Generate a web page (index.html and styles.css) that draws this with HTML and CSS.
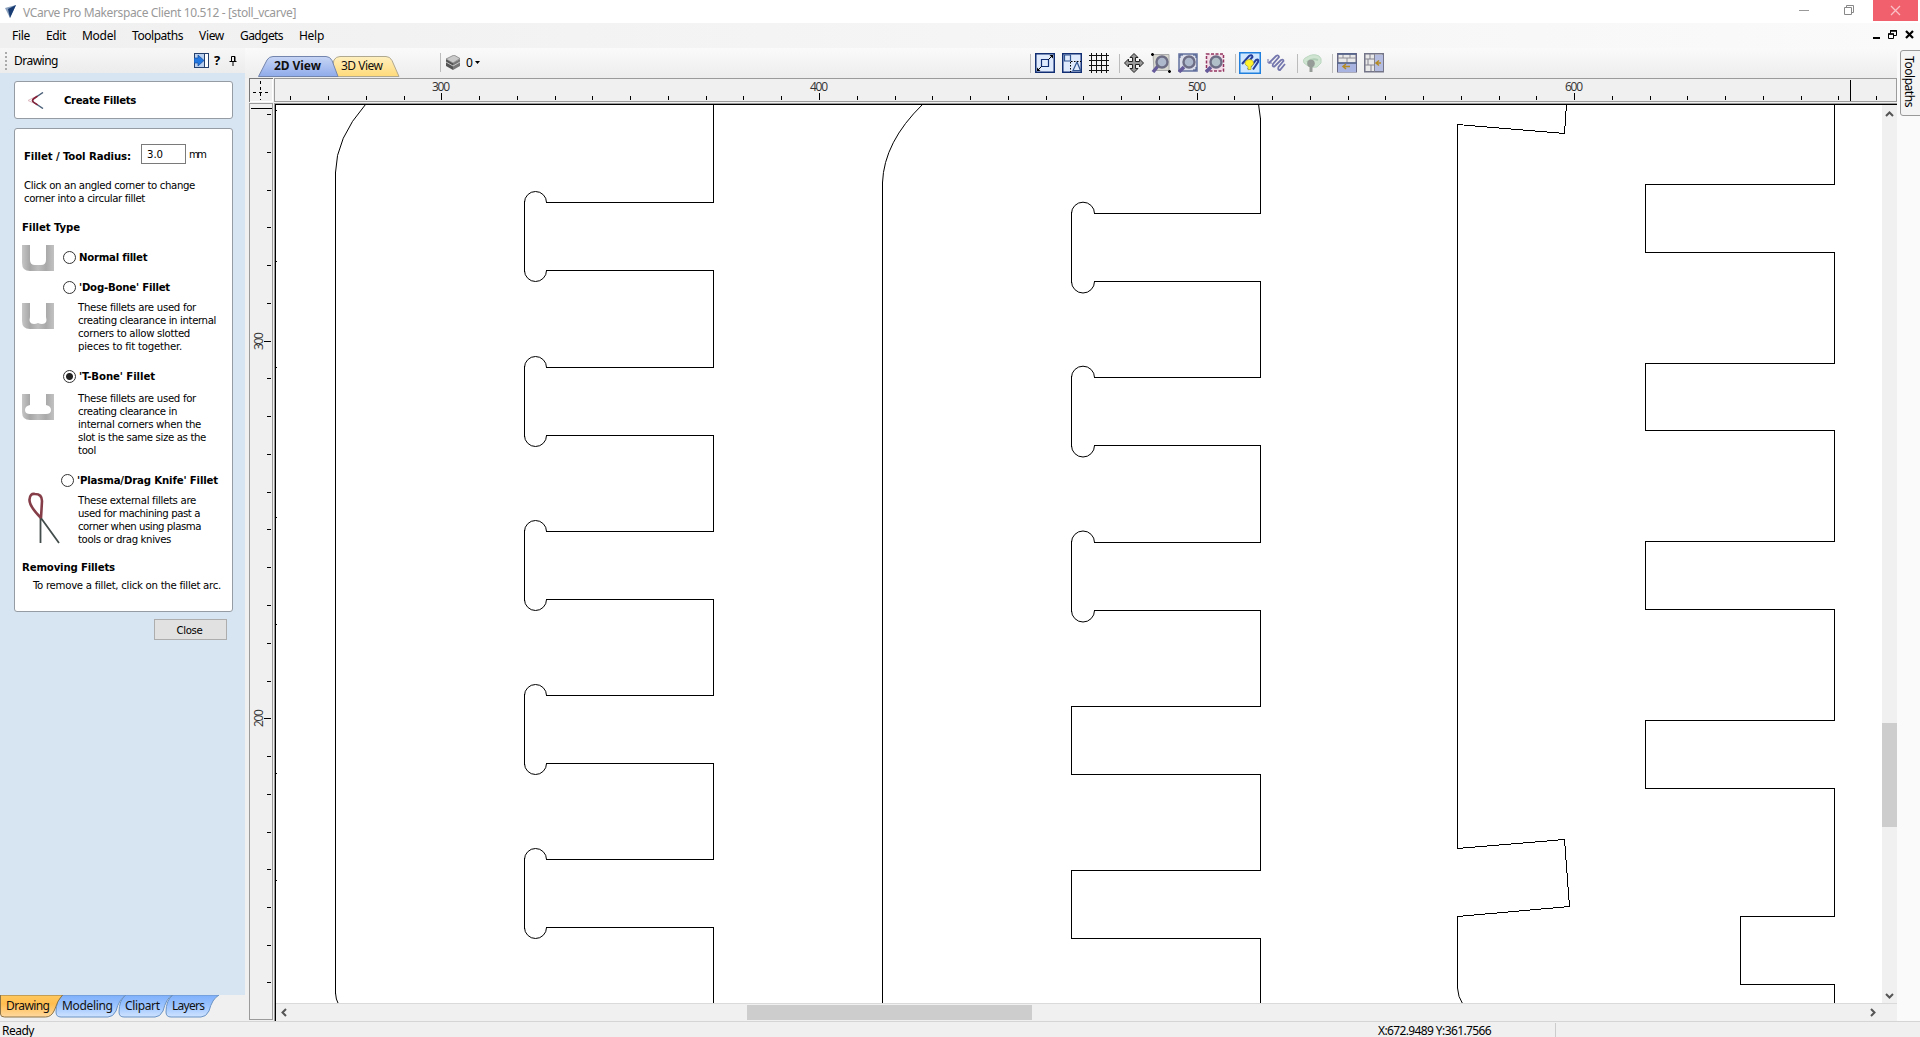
FILE: index.html
```html
<!DOCTYPE html>
<html lang="en">
<head>
<meta charset="utf-8">
<title>VCarve Pro Makerspace Client</title>
<link rel="stylesheet" href="styles.css">
</head>
<body>
<div class="app">
  <header class="titlebar">
    <svg class="logo" width="11" height="13" viewBox="0 0 11 13"><path d="M0 3L11 0 5 13Z" fill="#8aa0bd"/><path d="M3 4L11 0 5 13Z" fill="#173b72"/></svg>
    <span class="apptitle" data-w="273">VCarve Pro Makerspace Client 10.512 - [stoll_vcarve]</span>
    <div class="winbtns">
      <svg class="min" width="11" height="11" viewBox="0 0 11 11"><path d="M0 5.5h10" stroke="#999"/></svg>
      <svg class="restore" width="11" height="11" viewBox="0 0 11 11" fill="none" stroke="#888"><path d="M.5 2.500h7v7h-7zM2.500 2.500v-2h7v7h-2"/></svg>
      <div class="winclose"><svg width="11" height="11" viewBox="0 0 11 11"><path d="M1 1l9 9M10 1l-9 9" stroke="#fbc0c6" stroke-width="1.300"/></svg></div>
    </div>
  </header>
  <nav class="menubar">
    <div class="menus">
      <span data-w="18">File</span><span data-w="20">Edit</span><span data-w="34">Model</span><span data-w="51">Toolpaths</span><span data-w="25">View</span><span data-w="43">Gadgets</span><span data-w="25">Help</span>
    </div>
    <div class="mdibtns">
      <svg width="7" height="9" viewBox="0 0 7 9"><path d="M0 8h7" stroke="#000" stroke-width="2"/></svg>
      <svg width="9" height="9" viewBox="0 0 9 9" fill="none" stroke="#000"><path d="M.5 4h5v4.500h-5zM2.500 3.500v-3h6v5h-2.500" /><path d="M0 4h6M2 1h7" stroke-width="1.600"/></svg>
      <svg width="9" height="9" viewBox="0 0 9 9"><path d="M1 1l7 7M8 1l-7 7" stroke="#000" stroke-width="2.200"/></svg>
    </div>
  </nav>

  <div class="main">
    <aside class="side">
      <div class="sidehead">
        <i class="grip"></i><span class="sidetitle" data-w="44">Drawing</span>
        <svg width="15" height="15" viewBox="0 0 15 15"><rect x=".5" y=".5" width="14" height="14" fill="#fff" stroke="#26406e"/><path d="M1 1h9v13H1z" fill="#b9cff0"/><path d="M10.500 1v13" stroke="#26406e"/><path d="M0 5h4V2l6 5.500L4 13v-3H0z" fill="#2377e0" stroke="#164b9c" stroke-width=".7"/></svg>
        <b class="help">?</b>
        <svg width="8" height="10" viewBox="0 0 8 10"><path d="M2.500.5h3.500v5H2.500zM.5 5.500h7M4 6v4M5.500 1v4" fill="none" stroke="#000"/></svg>
      </div>
      <div class="sidebody">
        <section class="card head">
          <svg width="16" height="17" viewBox="0 0 16 17"><path d="M0 8.500L9 4M0 8.500l9 4" stroke="#ddb9c1" fill="none"/><path d="M15 .5L6 6.500q-3 2 0 4L15 16.500" fill="none" stroke="#4b6079" stroke-width="1.500"/><path d="M9.500 4.200L6 6.500q-3 2 0 4l3.500 2.300" fill="none" stroke="#8c2037" stroke-width="1.500"/></svg>
          <b data-w="72">Create Fillets</b>
        </section>
        <section class="card form">
          <div class="radius"><b data-w="107">Fillet / Tool Radius:</b><span class="field"><span data-w="16">3.0</span></span><span class="unit" data-w="16">mm</span></div>
          <p class="hint"><span data-w="171">Click on an angled corner to change</span><span data-w="121">corner into a circular fillet</span></p>
          <h4 class="t1"><span data-w="58">Fillet Type</span></h4>
          <div class="opt o1">
            <svg class="shape" width="32" height="26" viewBox="0 0 32 26">
              <defs><linearGradient id="wall"><stop stop-color="#c6c6c6"/><stop offset=".25" stop-color="#a6a6a6"/><stop offset=".5" stop-color="#bdbdbd"/><stop offset=".75" stop-color="#a9a9a9"/><stop offset="1" stop-color="#c2c2c2"/></linearGradient></defs>
              <path d="M0 0h8v15q0 5 5 5h6q5 0 5-5V0h8v26H8q-8 0-8-8z" fill="url(#wall)"/></svg>
            <i class="radio"></i><b data-w="68">Normal fillet</b>
          </div>
          <div class="opt o2"><i class="radio"></i><b data-w="91">'Dog-Bone' Fillet</b></div>
          <div class="body">
            <svg class="shape" width="32" height="26" viewBox="0 0 32 26"><path d="M0 0h8v14q-2 7 4 7 2 0 4-1 2 1 4 1 6 0 4-7V0h8v26H8q-8 0-8-8z" fill="url(#wall)"/></svg>
            <p><span data-w="118">These fillets are used for</span><span data-w="138">creating clearance in internal</span><span data-w="112">corners to allow slotted</span><span data-w="104">pieces to fit together.</span></p>
          </div>
          <div class="opt o3"><i class="radio on"></i><b data-w="76">'T-Bone' Fillet</b></div>
          <div class="body b3">
            <svg class="shape" width="32" height="26" viewBox="0 0 32 26"><path d="M0 0h8v11q-5 1-5 5 0 4 5 4h16q5 0 5-4 0-4-5-5V0h8v26H8q-8 0-8-8z" fill="url(#wall)"/></svg>
            <p><span data-w="118">These fillets are used for</span><span data-w="99">creating clearance in</span><span data-w="123">internal corners when the</span><span data-w="128">slot is the same size as the</span><span data-w="18">tool</span></p>
          </div>
          <div class="opt o4"><i class="radio"></i><b data-w="141">'Plasma/Drag Knife' Fillet</b></div>
          <div class="body b4">
            <svg class="knife" width="38" height="54" viewBox="0 0 38 54"><path d="M18.500 26v25M19 26L37 51" fill="none" stroke="#434d4b" stroke-width="1.800"/><path d="M19 26Q7 14 7.500 7.500T13 2q7 0 7 7l-1 17" fill="none" stroke="#853d48" stroke-width="2.600"/></svg>
            <p><span data-w="118">These external fillets are</span><span data-w="122">used for machining past a</span><span data-w="123">corner when using plasma</span><span data-w="93">tools or drag knives</span></p>
          </div>
          <h4 class="t2"><span data-w="93">Removing Fillets</span></h4>
          <p class="remove"><span data-w="188">To remove a fillet, click on the fillet arc.</span></p>
        </section>
        <button class="close"><span data-w="26">Close</span></button>
      </div>
      <svg class="sidetabs" width="245" height="26" viewBox="0 0 245 26">
        <defs>
          <linearGradient id="or" x2="0" y2="1"><stop stop-color="#ffc95f"/><stop offset=".4" stop-color="#ffbd50"/><stop offset="1" stop-color="#ffd9a0"/></linearGradient>
          <linearGradient id="bl" x2="0" y2="1"><stop stop-color="#7fb0fb"/><stop offset=".5" stop-color="#9cc4ff"/><stop offset="1" stop-color="#cfe3ff"/></linearGradient>
        </defs>
        <g fill="url(#bl)" stroke="#6b93c4">
          <path d="M173 0q-7 5-7 17 0 5 5 5h30q5 0 8-6 3-12 10-16z"/>
          <path d="M126 0q-7 5-7 17 0 5 5 5h31q5 0 8-6 3-12 9-16z"/>
          <path d="M63 0q-7 5-7 17 0 5 5 5h47q5 0 8-6 3-12 10-16z"/>
        </g>
        <path d="M.5 0v19q0 3 4 3h41q6 0 9-7 3-10 8-15z" fill="url(#or)" stroke="#8c7448"/>
        <g class="svgtext">
          <text x="6" y="15" textLength="44">Drawing</text><text x="62" y="15" textLength="51">Modeling</text><text x="125" y="15" textLength="35">Clipart</text><text x="172" y="15" textLength="33">Layers</text>
        </g>
      </svg>
    </aside>

    <main class="view">
      <div class="toolbar">
        <svg class="viewtabs" width="142" height="22" viewBox="0 0 142 22">
          <defs>
            <linearGradient id="tb" x2="0" y2="1"><stop stop-color="#c8d6f5"/><stop offset="1" stop-color="#8fabea"/></linearGradient>
            <linearGradient id="ty" x2="0" y2="1"><stop stop-color="#fff0c0"/><stop offset="1" stop-color="#ffda78"/></linearGradient>
          </defs>
          <path d="M72 20.500L76 4q2-3.500 6-3.500h46q4 0 6 4l7 16z" fill="url(#ty)" stroke="#b0a88f"/>
          <path d="M.5 20.500L9 4Q11 .5 15 .5h53q4 0 6 4l6 16z" fill="url(#tb)" stroke="#7385ad"/>
          <g class="svgtext"><text x="16" y="14" font-weight="bold" textLength="47">2D View</text><text x="83" y="14" textLength="42">3D View</text></g>
        </svg>
        <i class="sep layersep"></i>
        <svg width="15" height="15" viewBox="0 0 15 15"><path d="M0 4l7 4v7L0 11z" fill="#555"/><path d="M7 8l7-4v7l-7 4z" fill="#777"/><path d="M0 4l8-4 6 3.500L7 8z" fill="#c9c9c9" stroke="#777" stroke-width=".7"/><path d="M0 7l7 4 7-4" fill="none" stroke="#ddd" stroke-width=".8"/></svg>
        <span class="zero">0</span><svg class="caret" width="5" height="3" viewBox="0 0 5 3"><path d="M0 0h5L2.500 3z"/></svg>
        <div class="tools">
          <i class="sep"></i>
          <svg class="ic" viewBox="0 0 20 20" fill="none" stroke="#132f74"><rect x=".75" y=".75" width="18.500" height="18.500" fill="#dfeafd" stroke-width="1.500"/><path d="M6.500 6.500h7v7h-7z" stroke-width="1.200"/><path d="M13.500 6.500l3.500-3.500M6.500 13.500L3 17" stroke="#000"/><path d="M18 2v3.500L14.500 2zM2 18v-3.500L5.500 18z" fill="#000" stroke="none"/></svg>
          <svg class="ic" viewBox="0 0 20 20" fill="none" stroke="#31558f"><rect x=".75" y=".75" width="18.500" height="18.500" fill="#dfeafd" stroke="#132f74" stroke-width="1.500"/><path d="M2.500 2h6v6h-6zM11 17.500l4-8.500 3.500 8.500z" stroke-width="1.200"/><path d="M9 8.500h10M8.500 9v10" stroke="#000" stroke-dasharray="1.500 1.500"/></svg>
          <svg class="ic" viewBox="0 0 20 20" stroke="#111" shape-rendering="crispEdges"><path d="M2.500 0v20M7.500 0v20M12.500 0v20M17.500 0v20M0 2.500h20M0 7.500h20M0 12.500h20M0 17.500h20"/></svg>
          <i class="sep"></i>
          <svg class="ic" viewBox="0 0 20 20"><path d="M10 .5l4 4h-2.500v4h4V6l4 4-4 4v-2.500h-4v4H14l-4 4-4-4h2.500v-4h-4V14l-4-4 4-4v2.500h4v-4H6z" fill="#999" stroke="#222"/></svg>
          <svg class="ic" viewBox="0 0 20 20"><path d="M2 1.500h16v16H3z" fill="#d8d8d0" stroke="#aaa"/><path d="M7 13l-5 6" stroke="#655a9a" stroke-width="3.500"/><circle cx="11" cy="9" r="5.500" fill="#aeb8cc" stroke="#6d6d86" stroke-width="2.400"/><path d="M0 1.500h3M1.500 0v3M17 18.500h3M18.500 17v3" stroke="#000" stroke-width="1.500"/></svg>
          <svg class="ic" viewBox="0 0 20 20"><path d="M1 1h18v17H1z" fill="#dcdfeb" stroke="#63719e" stroke-width="1.500"/><path d="M2 5V2h3M15 2h3v3M18 14v3h-3" fill="none" stroke="#3f5183" stroke-width="1"/><path d="M6 14l-5 5" stroke="#655a9a" stroke-width="3.500"/><circle cx="11" cy="9" r="5.500" fill="#aeb8cc" stroke="#6d6d86" stroke-width="2.400"/></svg>
          <svg class="ic" viewBox="0 0 20 20"><path d="M1.500 1h17v17h-17z" fill="#f3dce8" stroke="#92345f" stroke-width="1.500" stroke-dasharray="3 1.500"/><path d="M6 14l-5 5" stroke="#655a9a" stroke-width="3.500"/><circle cx="11" cy="9" r="5.500" fill="#b0bfc8" stroke="#6d6d86" stroke-width="2.400"/></svg>
          <i class="sep"></i>
          <svg class="ic sel" viewBox="0 0 22 22"><rect x=".75" y=".75" width="20.500" height="20.500" fill="#cfe8ff" stroke="#2180dd" stroke-width="1.500"/><path d="M3 12L10 4q3-2 3.500 1L7 13M9 17.500L17 8q3-1.500 2 2l-5 7.500" fill="none" stroke="#263f9b" stroke-width="2"/><path d="M10 7.500q4.500 0 4.500 4-.5 2-2.500 3v3H9v-3q-2.500-1-3-3 0-3.500 4-4z" fill="#fff32c" stroke="#b5a92c" stroke-width=".7"/></svg>
          <svg class="ic" viewBox="0 0 20 20" fill="none" stroke="#7375ad" stroke-width="1.800"><path d="M2 10l7-7q2.500-1.500 3 1l-6 7q-1 3 1.500 2.500L14 7q2.500-1 2.500 1l-5 6q-1 3 1.500 3l5-6"/><path d="M1 6v4h4" stroke-width="1"/></svg>
          <i class="sep"></i>
          <svg class="ic" viewBox="0 0 20 20"><path d="M2 10Q0 6 5 4q6-4 12-1 3 2 2 7l-4 4q-6 1-9-1z" fill="#cfe5d2" stroke="#bcd7c0"/><path d="M5 9q5-4 11-2" fill="none" stroke="#b0cdb5" stroke-width="2"/><circle cx="9" cy="10.500" r="3.800" fill="#969c97"/><path d="M7.500 12h3v7h-3z" fill="#969c97"/></svg>
          <i class="sep"></i>
          <svg class="ic" viewBox="0 0 20 20"><rect x=".75" y=".75" width="18.500" height="18" fill="#e9e9e9" stroke="#686884" stroke-width="1.500"/><path d="M1 10h18v9H1z" fill="#a9b3df"/><path d="M0 10h20M1 5h18M6 1v4M13 1v4M10 5v5" stroke="#8e8e98"/><path d="M1 1h18M0 10h20" stroke="#52618b" stroke-width="1.500"/><path d="M6 13.500h7M9 11l-3 2.500L9 16" stroke="#b48a23" stroke-width="1.500" fill="none"/></svg>
          <svg class="ic" viewBox="0 0 20 20"><rect x=".75" y=".75" width="18.500" height="18" fill="#e9e9e9" stroke="#75758a" stroke-width="1.500"/><path d="M11 2h8v16h-8z" fill="#b4bce0"/><path d="M10.500 1v18M1 6h9M1 12h9M6 1v5M4 6v6M7 12v6" stroke="#83838f"/><path d="M12 10h5M15 7.500L12 10l3 2.500" stroke="#b48a23" stroke-width="1.500" fill="none"/></svg>
        </div>
      </div>
      <div class="work">
        <svg class="corner" width="24" height="24" viewBox="0 0 24 24" shape-rendering="crispEdges"><path d="M.5 24V.5H24" fill="none" stroke="#777"/><path d="M23.500 1v22.500H1" fill="none" stroke="#fff"/><path d="M4 14.500h15M11.500 3v19" stroke="#000" stroke-dasharray="3 3" /></svg>
        <svg class="ruler" width="1623" height="24" viewBox="274 78 1623 24" shape-rendering="crispEdges">
          <rect x="274.500" y="78.500" width="1622" height="23" fill="#f0f0f0" stroke="#9b9b9b"/>
          <path stroke="#000" d="M290.500 96v4M328.500 96v4M366.500 96v4M404.500 96v4M441.500 93v7M479.500 96v4M517.500 96v4M555.500 96v4M592.500 96v4M630.500 96v4M668.500 96v4M706.500 96v4M743.500 96v4M781.500 96v4M819.500 93v7M857.500 96v4M895.500 96v4M932.500 96v4M970.500 96v4M1008.500 96v4M1046.500 96v4M1083.500 96v4M1121.500 96v4M1159.500 96v4M1197.500 93v7M1234.500 96v4M1272.500 96v4M1310.500 96v4M1348.500 96v4M1385.500 96v4M1423.500 96v4M1461.500 96v4M1499.500 96v4M1536.500 96v4M1574.500 93v7M1612.500 96v4M1650.500 96v4M1687.500 96v4M1725.500 96v4M1763.500 96v4M1801.500 96v4M1838.500 96v4M1876.500 96v4M1850.500 80v21"/>
          <g class="num"><text x="432" y="91" textLength="18">300</text><text x="810" y="91" textLength="18">400</text><text x="1188" y="91" textLength="18">500</text><text x="1565" y="91" textLength="18">600</text></g>
        </svg>
        <svg class="ruler" width="24" height="917" viewBox="249 103 24 917" shape-rendering="crispEdges">
          <rect x="249.500" y="103.500" width="23" height="916" fill="#f0f0f0" stroke="#9b9b9b"/>
          <path stroke="#000" d="M251 108.500h21M267 114.500h4M267 152.500h4M267 190.500h4M267 227.500h4M267 265.500h4M267 303.500h4M264 341.500h7M267 378.500h4M267 416.500h4M267 454.500h4M267 492.500h4M267 529.500h4M267 567.500h4M267 605.500h4M267 643.500h4M267 681.500h4M264 718.500h7M267 756.500h4M267 794.500h4M267 832.500h4M267 869.500h4M267 907.500h4M267 945.500h4M267 982.500h4"/>
          <g class="num"><text transform="translate(263 350) rotate(-90)" textLength="18">300</text><text transform="translate(263 727) rotate(-90)" textLength="18">200</text></g>
        </svg>
        <div class="canvas">
          <svg class="drawing" width="1606" height="898" viewBox="276 105 1606 898">
            <g fill="none" stroke="#000" stroke-width="1">
              <path class="crisp" d="M335.500 172V994M713.500 105V202.500M713.500 270V367.500M713.500 435V531.500M713.500 599V695.500M713.500 763V859.500M713.500 927V1003"/>
              <path d="M335.500 172.500Q336 138 365.500 104.500M335.500 993Q336 1000 338 1003"/>
              <path class="crisp" d="M524.500 201V272M524.500 366V437M524.500 530V601M524.500 694V765M524.500 858V929M546 202.500H714M546 270.500H714M546 367.500H714M546 435.500H714M546 531.500H714M546 599.500H714M546 695.500H714M546 763.500H714M546 859.500H714M546 927.500H714"/>
              <path d="M524.500 202.500a11 11 0 0 1 22 0M524.500 270.500a11 11 0 0 0 22 0M524.500 367.500a11 11 0 0 1 22 0M524.500 435.500a11 11 0 0 0 22 0M524.500 531.500a11 11 0 0 1 22 0M524.500 599.500a11 11 0 0 0 22 0M524.500 695.500a11 11 0 0 1 22 0M524.500 763.500a11 11 0 0 0 22 0M524.500 859.500a11 11 0 0 1 22 0M524.500 927.500a11 11 0 0 0 22 0"/>
              <path class="crisp" d="M882.500 182V1003M1260.500 118V213.500H1094M1094 281.500H1260.500V377.500H1094M1094 445.500H1260.500V542.500H1094M1094 610.500H1260.500V706.500H1071.500V774.500H1260.500V870.500H1071.500V938.500H1260.500V1003M1071.500 212V283M1071.500 376V447M1071.500 541V612"/>
              <path d="M882.500 182.500Q884 142 922.500 104.500M1258.500 104L1260.500 119M1071.500 213.500a11.500 11.300 0 0 1 23 0M1071.500 281.500a11.500 11.500 0 0 0 23 0M1071.500 377.500a11.500 11.300 0 0 1 23 0M1071.500 445.500a11.500 11.500 0 0 0 23 0M1071.500 542.500a11.500 11.500 0 0 1 23 0M1071.500 610.500a11.500 11.500 0 0 0 23 0"/>
              <path class="crisp" d="M1457.500 124V848.500L1564.500 839.500 1569.500 906.500 1457.500 916.500V988M1457.500 124.500L1564.500 133.500 1566.500 104"/>
              <path d="M1457.500 988Q1458 997 1462.500 1003.500"/>
              <path class="crisp" d="M1834.500 104V184.500H1645.500V252.500H1834.500V363.500H1645.500V430.500H1834.500V541.500H1645.500V609.500H1834.500V720.500H1645.500V788.500H1834.500V916.500H1740.500V984.500H1834.500V1003"/>
              <path class="crisp" d="M276 110.500h1M276 261.500h1M276 367.500h1M276 517.500h1M276 624.500h1M276 773.500h1M276 880.500h1"/>
            </g>
          </svg>
          <div class="vscroll">
            <svg width="9" height="6" viewBox="0 0 9 6"><path d="M1 5l3.500-3.500L8 5" fill="none" stroke="#555" stroke-width="2"/></svg>
            <i></i>
            <svg width="9" height="6" viewBox="0 0 9 6"><path d="M1 1l3.500 3.500L8 1" fill="none" stroke="#555" stroke-width="2"/></svg>
          </div>
          <div class="hscroll">
            <svg width="6" height="9" viewBox="0 0 6 9"><path d="M5 1L1.500 4.500 5 8" fill="none" stroke="#555" stroke-width="2"/></svg>
            <i></i>
            <svg width="6" height="9" viewBox="0 0 6 9"><path d="M1 1l3.500 3.500L1 8" fill="none" stroke="#555" stroke-width="2"/></svg>
          </div>
        </div>
      </div>
    </main>
    <aside class="dock"><div class="docktab"><span data-w="51">Toolpaths</span></div></aside>
  </div>
  <footer class="status"><span class="ready" data-w="32">Ready</span><span class="coords"><span data-w="113">X:672.9489 Y:361.7566</span></span><i></i></footer>
</div>
<script src="fit.js"></script>
</body>
</html>
```
FILE: styles.css
```css
* { box-sizing: border-box; }
body { margin: 0; background: #f0f0f0; color: #000; font: 12px/13px "Noto Sans", "Open Sans", sans-serif; overflow: hidden; }
svg { display: block; flex: none; }
i { display: block; flex: none; }
p, h4 { margin: 0; }
[data-w] { display: inline-block; white-space: pre; flex: none; }
.app { display: flex; flex-direction: column; width: 1920px; height: 1037px; }

.titlebar { display: flex; align-items: center; height: 23px; padding-left: 5px; background: #fff; color: #999; }
.apptitle { margin-left: 7px; padding-top: 1px; }
.winbtns { display: flex; align-items: center; margin-left: auto; align-self: flex-start; height: 21px; }
.min { margin-right: 34px; }
.restore { margin-right: 18px; }
.winclose { display: flex; align-items: center; justify-content: center; width: 45px; height: 21px; margin-right: 2px; background: #f0616d; }

.menubar { display: flex; justify-content: space-between; height: 25px; background: linear-gradient(90deg, #f0f0f0, #fafafa); }
.menus { display: flex; gap: 16px; padding: 6px 0 0 12px; }
.mdibtns { display: flex; align-items: center; gap: 8px; padding: 0 6px 3px 0; }

.main { display: flex; height: 973px; }
.side { display: flex; flex-direction: column; width: 245px; }
.sidehead { display: flex; align-items: center; height: 25px; padding-left: 5px; background: linear-gradient(#f7f7f7, #ececec); }
.grip { width: 2px; height: 18px; background: repeating-linear-gradient(#aaa 0 2px, transparent 2px 4px); }
.sidetitle { margin: 0 136px 0 7px; }
.help { width: 8px; margin: 0 7px 0 5px; font-size: 13px; }
.sidebody { display: flex; flex-direction: column; height: 922px; padding: 8px 12px 0 14px; background: #d7e4f1; }
.card { width: 219px; border: 1px solid #969ca3; border-radius: 3px; background: #fff; }
.card, .close { font-family: "DejaVu Sans Condensed", "DejaVu Sans", "Noto Sans", sans-serif; font-stretch: condensed; font-size: 11.3px; }
.head { display: flex; align-items: center; gap: 20px; height: 38px; padding-left: 13px; }
.head b { margin-top: 1px; }
.form { height: 484px; margin-top: 9px; padding: 15px 0 0 7px; }
.radius { display: flex; height: 20px; }
.radius > b { margin: 6px 10px 0 2px; }
.field { width: 45px; height: 20px; padding: 3px 0 0 5px; border: 1px solid #7a7a7a; }
.unit { margin: 4px 0 0 3px; }
.hint { display: flex; flex-direction: column; align-items: flex-start; margin: 15px 0 0 2px; }
h4 { height: 14px; font-size: 11.3px; }
.t1 { margin-top: 16px; }
.opt { display: flex; align-items: center; height: 14px; padding-left: 41px; gap: 3px; }
.o1 { height: 26px; margin-top: 10px; padding-left: 0; }
.o1 .shape { margin-right: 6px; }
.o1 .radio, .o1 b { margin-bottom: 2px; }
.o2 { margin-top: 9px; }
.o3 { margin-top: 16px; }
.o4 { margin-top: 16px; padding-left: 39px; }
.radio { width: 13px; height: 13px; border: 1px solid #333; border-radius: 50%; }
.on { background: radial-gradient(circle, #222 0 3px, #fff 4px); }
.body { display: flex; gap: 24px; margin-top: 7px; }
.body p { display: flex; flex-direction: column; align-items: flex-start; }
.body .shape { margin-top: 2px; }
.b3 { margin-top: 9px; }
.b4 { gap: 18px; height: 52px; }
.b4 .knife { margin-top: -2px; }
.t2 { margin-top: 15px; }
.remove { margin: 4px 0 0 11px; }
.close { align-self: flex-end; width: 73px; height: 21px; margin: 7px 6px 0 0; padding: 1px 2px 0 0; border: 1px solid #adadad; background: #e1e1e1; line-height: 13px; }
.svgtext { font: 12px "Noto Sans", "Open Sans", sans-serif; }
.svgtext text { stroke: none; fill: #111; }

.view { width: 1652px; }
.toolbar { display: flex; height: 30px; padding-left: 13px; background: linear-gradient(#fafafa, #ededed); }
.viewtabs { margin-top: 8px; }
.sep { width: 1px; height: 19px; background: #bcbcbc; }
.layersep { margin: 5px 5px 0 40px; }
.toolbar > svg:not(.viewtabs) { margin-top: 7px; }
.zero { margin: 8px 2px 0 5px; width: 7px; }
.toolbar > .caret { margin-top: 13px !important; }
.tools { display: flex; align-items: center; height: 30px; margin-left: auto; padding-right: 506px; }
.tools .sep { margin: 0 4px 0 3px; }
.ic { width: 20px; height: 20px; margin-right: 7px; }
.sel { width: 22px; height: 22px; margin: 0 6px 0 -1px; }
.work { display: grid; grid-template: 24px 918px / 24px 1623px; gap: 1px; margin-left: 4px; }
.num { font: 12px "Open Sans", "Noto Sans", sans-serif; fill: #333; }
.canvas { display: grid; grid-template: 898px 18px / 1606px 15px; border-left: 1px solid #9b9b9b; border-top: 1px solid #9b9b9b; background: #fff; box-shadow: inset 1px 1px #000; padding: 1px 0 0 1px; }
.drawing { background: #fff; }
.crisp { shape-rendering: crispEdges; }
.vscroll, .hscroll { display: flex; align-items: center; background: #f0f0f0; }
.vscroll { flex-direction: column; padding-top: 6px; }
.vscroll i { width: 15px; height: 104px; margin: 606px 0 166px; background: #cdcdcd; }
.hscroll { grid-column: 1 / 3; padding-left: 5px; border-top: 1px solid #dadada; }
.hscroll i { width: 285px; height: 15px; margin: 0 838px 0 460px; background: #cdcdcd; }
.dock { width: 23px; background: #fafafa; }
.docktab { width: 22px; height: 66px; margin: 2px 0 0 3px; padding: 5px 5px 0 0; border: 1px solid #999; border-radius: 3px 0 0 3px; background: #f4f4f4; writing-mode: vertical-rl; }
.status { display: flex; height: 16px; padding-left: 2px; border-top: 1px solid #d5d5d5; background: #f0f0f0; line-height: 12px; }
.ready, .coords { margin-top: 3px; }
.coords { margin-left: 1344px; }
.status i { width: 1px; height: 14px; margin: 1px 0 0 64px; background: #ccc; }
```
FILE: fit.js
```js
// Adjusts tracking so each label occupies its designed width.
document.querySelectorAll('[data-w]').forEach(function (el) {
  var box = el.getBoundingClientRect();
  var natural = Math.max(box.width, box.height > 20 ? box.height : 0);
  el.style.letterSpacing = ((el.dataset.w - natural) / el.textContent.length) + 'px';
});
```
